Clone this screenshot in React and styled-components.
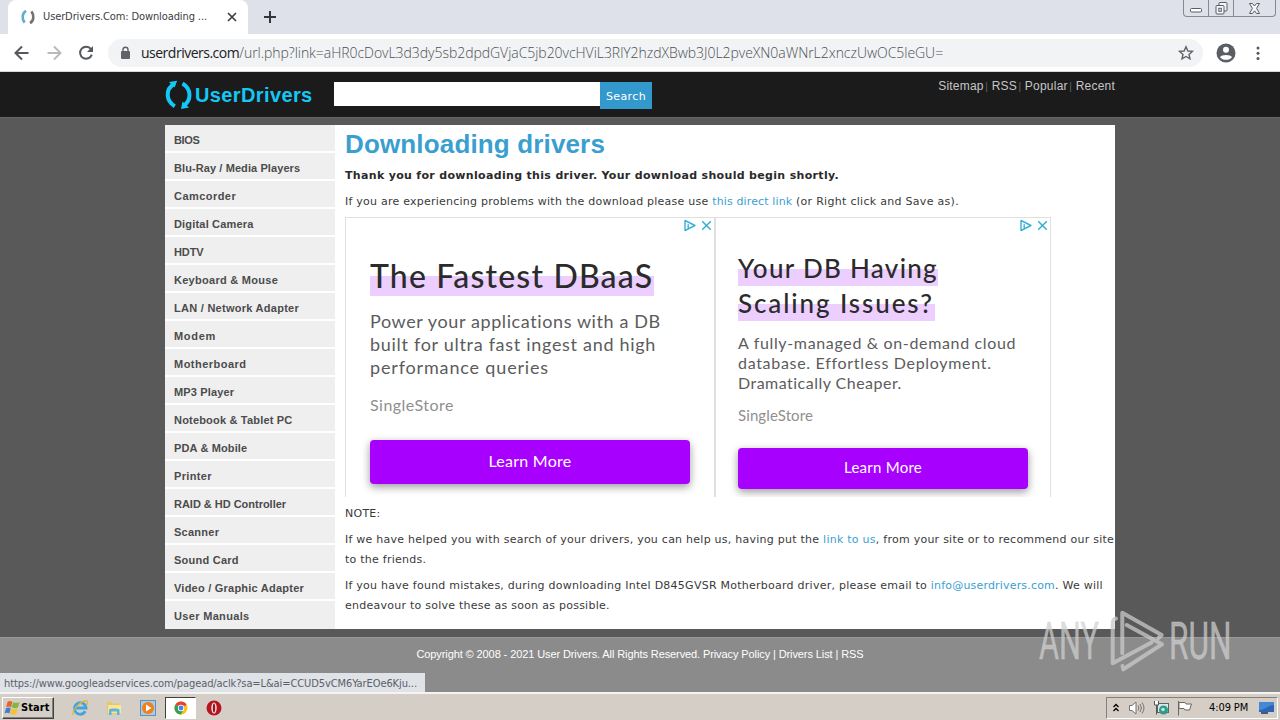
import React from "react";
import styled, { createGlobalStyle } from "styled-components";

const verdana = `"DejaVu Sans", Verdana, sans-serif`;
const tahoma = `"DejaVu Sans Condensed", Tahoma, sans-serif`;
const arial = `"Liberation Sans", Arial, sans-serif`;
const display = `Lato, sans-serif`;

const Global = createGlobalStyle`
  * { box-sizing: border-box; }
  html, body { margin: 0; padding: 0; overflow: hidden; }
  svg { display: block; flex: none; }
`;

const Screen = styled.div`
  position: relative;
  display: flex;
  flex-direction: column;
  width: 1280px;
  height: 720px;
  background: #595959;
`;

/* Browser chrome */
const TabStrip = styled.div`
  display: flex;
  height: 34px;
  padding-left: 8px;
  background: #dee1e9;
`;
const Tab = styled.div`
  display: flex;
  align-items: center;
  width: 240px;
  height: 34px;
  padding: 0 9px 0 12px;
  border-radius: 8px 8px 0 0;
  background: #fff;
`;
const TabTitle = styled.span`
  flex: 1;
  margin-left: 7px;
  font: 11px/14px ${tahoma};
  letter-spacing: -0.11px;
  color: #3c4043;
  white-space: nowrap;
`;
const NewTab = styled.div`
  display: flex;
  align-items: center;
  margin-left: 15px;
`;
const WindowControls = styled.div`
  display: flex;
  width: 93px;
  height: 17px;
  margin: 0 4px 0 auto;
  border: 1px solid #858991;
  border-top: 0;
  border-radius: 0 0 4px 4px;
`;
const WindowButton = styled.div`
  display: flex;
  align-items: center;
  justify-content: center;
  width: ${(p) => p.$width}px;
  border-left: ${(p) => (p.$first ? "0" : "1px solid #858991")};
`;
const Toolbar = styled.div`
  display: flex;
  align-items: center;
  height: 38px;
  padding: 0 12px 0 12px;
  border-bottom: 1px solid #d5d7da;
  background: #fff;
`;
const ToolIcon = styled.div`
  display: flex;
  justify-content: center;
  width: 20px;
  margin-right: 12px;
`;
const Omnibox = styled.div`
  display: flex;
  align-items: center;
  width: 1095px;
  height: 28px;
  padding: 0 8px 0 11px;
  border-radius: 14px;
  background: #f1f3f4;
`;
const Address = styled.div`
  flex: 1;
  margin-left: 9px;
  font: 300 14px/20px "Open Sans", sans-serif;
  letter-spacing: -0.04px;
  color: #4d5156;
  white-space: nowrap;
`;
const Host = styled.span`
  font-weight: 400;
  letter-spacing: -0.5px;
  color: #202124;
`;
const Profile = styled.div`
  display: flex;
  margin: 0 17px 0 13px;
`;

/* Site */
const SiteHeader = styled.header`
  display: flex;
  align-items: flex-start;
  height: 46px;
  padding: 0 165px;
  border-bottom: 1px solid #666;
  background: #1b1b1b;
`;
const Logo = styled.svg`
  margin-top: 7px;
`;
const SearchForm = styled.div`
  display: flex;
  margin: 10px 0 0 19px;
`;
const SearchField = styled.div`
  width: 266px;
  height: 24px;
  background: #fff;
`;
const SearchButton = styled.div`
  width: 52px;
  height: 27px;
  background: #3399cc;
  color: #fff;
  font: 11px/29px ${verdana};
  letter-spacing: 0.37px;
  text-align: center;
`;
const TopLinks = styled.nav`
  margin-left: auto;
  padding-top: 7px;
  font: 12px/14px ${arial};
  letter-spacing: 0.22px;
  color: #c6c6c6;
  white-space: nowrap;
`;
const Divider = styled.span`
  margin-left: 1.5px;
  font-size: 10px;
  color: #666;
`;
const Page = styled.div`
  display: flex;
  width: 950px;
  height: 504px;
  margin: 7px 165px 8px;
  background: #fff;
`;
const Sidebar = styled.nav`
  width: 170px;
`;
const Category = styled.div`
  height: 28px;
  padding-left: 9px;
  border-bottom: ${(p) => (p.$last ? "0" : "2px solid #fff")};
  background: #efefef;
  color: #4b4b4b;
  font: bold 11px/30px ${arial};
  letter-spacing: ${(p) => p.$spacing ?? 0.18}px;
  white-space: nowrap;
`;
const Content = styled.main`
  display: flex;
  flex-direction: column;
  width: 780px;
  padding-left: 10px;
`;
const Title = styled.h1`
  height: 30px;
  margin: 4px 0 7px;
  font: bold 26px/30px ${arial};
  letter-spacing: 0.15px;
  color: #3a9fd0;
`;
const Text = styled.p`
  margin: 0 0 6px;
  font: ${(p) => (p.$bold ? "bold" : "normal")} 11px/20px ${verdana};
  letter-spacing: ${(p) => (p.$bold ? 0.325 : p.$spacing ?? 0.25)}px;
  color: ${(p) => (p.$bold ? "#2a2a2a" : "#3a3a3a")};
  white-space: nowrap;
`;
const Link = styled.a`
  color: #3b9fd0;
  letter-spacing: ${(p) => p.$spacing ?? 0.25}px;
`;
const Aside = styled.span`
  letter-spacing: 0.29px;
`;

/* Advertisements */
const Ads = styled.div`
  display: flex;
  height: 280px;
  margin: -1px 0 7px;
  overflow: hidden;
`;
const Ad = styled.section`
  position: relative;
  width: ${(p) => p.$width}px;
  padding: ${(p) => p.$padding};
  border: 1px solid #e0e0e0;
  border-bottom: 0;
  font-family: ${display};
  white-space: nowrap;
`;
const AdChoices = styled.div`
  position: absolute;
  top: 1px;
  right: 1px;
  display: flex;
  gap: 3px;
`;
const Headline = styled.h2`
  margin: 0;
  font-size: ${(p) => p.$size}px;
  line-height: ${(p) => p.$line}px;
  font-weight: 500;
  color: #2b2b2b;
`;
const Marked = styled.span`
  display: block;
  width: ${(p) => p.$width}px;
  letter-spacing: ${(p) => p.$spacing}px;
  background: linear-gradient(transparent ${(p) => p.$from}px, #eccfff ${(p) => p.$from}px, #eccfff ${(p) => p.$to}px, transparent ${(p) => p.$to}px);
`;
const Pitch = styled.div`
  margin-top: ${(p) => p.$top}px;
  font-size: ${(p) => p.$size}px;
  line-height: ${(p) => p.$line}px;
  color: #5c5c5c;
`;
const PitchLine = styled.div`
  letter-spacing: ${(p) => p.$spacing}px;
`;
const Brand = styled.div`
  margin-top: ${(p) => p.$top}px;
  font-size: ${(p) => p.$size}px;
  line-height: 20px;
  letter-spacing: ${(p) => p.$spacing}px;
  color: #8f8f8f;
`;
const CallToAction = styled.div`
  width: ${(p) => p.$width}px;
  height: ${(p) => p.$height}px;
  margin-top: ${(p) => p.$top}px;
  border-radius: 4px;
  background: #a800ff;
  box-shadow: 0 3px 8px rgba(0, 0, 0, 0.4);
  color: #fff;
  font-size: ${(p) => p.$size}px;
  line-height: ${(p) => p.$height - 2}px;
  letter-spacing: 0.25px;
  text-align: center;
`;

const Footer = styled.footer`
  height: 55px;
  border-top: 1px solid #999;
  background: #8b8b8b;
  color: #fff;
  font: 11px/33px ${arial};
  letter-spacing: -0.1px;
  text-align: center;
`;
const StatusBubble = styled.div`
  position: absolute;
  left: 0;
  top: 673px;
  width: 425px;
  height: 19px;
  padding-left: 4px;
  background: #dfe2e7;
  color: #5c6066;
  font: 11px/21px ${tahoma};
  letter-spacing: -0.095px;
  white-space: nowrap;
`;
const Watermark = styled.svg`
  position: absolute;
  left: 1036px;
  top: 606px;
`;

/* Taskbar */
const Taskbar = styled.div`
  display: flex;
  align-items: center;
  height: 28px;
  padding: 1px 2px 0;
  border-top: 2px solid #f6f4f1;
  background: #d5cec7;
`;
const StartButton = styled.div`
  display: flex;
  align-items: center;
  width: 52px;
  height: 22px;
  padding-left: 1px;
  border: 1px solid;
  border-color: #fff #404040 #404040 #fff;
  box-shadow: inset -1px -1px #858079;
  color: #000;
  font: bold 11px/18px ${tahoma};
  letter-spacing: 0.1px;
`;
const Launcher = styled.div`
  display: flex;
  align-items: center;
  justify-content: center;
  width: ${(p) => (p.$active ? 31 : 34)}px;
  height: 22px;
  border: 1px solid;
  border-color: ${(p) => (p.$active ? "#404040 #fff #fff #404040" : "transparent")};
  background: ${(p) => (p.$active ? "#fff" : "transparent")};
`;
const Launchers = styled.div`
  display: flex;
  padding-left: 9px;
`;
const Tray = styled.div`
  display: flex;
  align-items: center;
  width: 172px;
  height: 22px;
  margin-left: auto;
  padding-left: 6px;
  border: 1px solid;
  border-color: #858079 #fff #fff #858079;
`;
const TrayIcon = styled.div`
  margin-right: ${(p) => p.$gap}px;
`;
const Clock = styled.div`
  margin-right: 10px;
  color: #000;
  font: 11px/18px ${tahoma};
  letter-spacing: -0.1px;
  white-space: nowrap;
`;

const ArrowIcon = ({ color, flip }) => (
  <svg width="16" height="16" viewBox="0 0 16 16" fill="none" stroke={color} strokeWidth="2">
    <path d={flip ? "M1.500 8H14M8 1.500 14.500 8 8 14.500" : "M14.500 8H2M8 1.500 1.500 8 8 14.500"} />
  </svg>
);

const AdBadge = () => (
  <AdChoices>
    <svg width="14" height="13" viewBox="0 0 14 13" fill="none" stroke="#3aafd4" strokeWidth="1.4">
      <path d="M2 1.500V11.500L12 6.500Z" strokeLinejoin="round" />
      <path d="M5.200 5.300V9" />
    </svg>
    <svg width="13" height="13" viewBox="0 0 13 13" stroke="#3aafd4" strokeWidth="1.5">
      <path d="M2.200 2.200 10.800 10.800M10.800 2.200 2.200 10.800" />
    </svg>
  </AdChoices>
);

const categories = [
  ["BIOS", -0.35], ["Blu-Ray / Media Players", 0.09], ["Camcorder", 0.45], ["Digital Camera", 0.18], ["HDTV", -0.1],
  ["Keyboard & Mouse", 0.28], ["LAN / Network Adapter", 0.27], ["Modem", 0.7], ["Motherboard", 0.48], ["MP3 Player", 0.15],
  ["Notebook & Tablet PC", 0.19], ["PDA & Mobile", 0.13], ["Printer", 0.35], ["RAID & HD Controller", -0.02],
  ["Scanner", 0.25], ["Sound Card", 0.25], ["Video / Graphic Adapter", 0.23], ["User Manuals", 0.33],
];

export default function App() {
  return (
    <Screen>
      <Global />
      <TabStrip>
        <Tab>
          <svg width="16" height="16" viewBox="0 0 16 16" fill="none" strokeWidth="2.600">
            <path d="M6 1.800C2.300 4 1.400 9.500 4.600 13.600" stroke="#62a9d3" />
            <path d="M10 14.200C13.700 12 14.600 6.500 11.400 2.400" stroke="#77706f" />
          </svg>
          <TabTitle>UserDrivers.Com: Downloading ...</TabTitle>
          <svg width="14" height="14" viewBox="0 0 14 14" stroke="#3c4043" strokeWidth="1.700">
            <path d="M3 3 11 11M11 3 3 11" />
          </svg>
        </Tab>
        <NewTab>
          <svg width="14" height="14" viewBox="0 0 14 14" stroke="#33363a" strokeWidth="2">
            <path d="M7 1V13M1 7H13" />
          </svg>
        </NewTab>
        <WindowControls>
          <WindowButton $width={24} $first>
            <svg width="14" height="15" viewBox="0 0 14 15" fill="#fff" stroke="#585c64">
              <rect x="1.500" y="7.500" width="11" height="3.500" rx="1" />
            </svg>
          </WindowButton>
          <WindowButton $width={25}>
            <svg width="15" height="15" viewBox="0 0 15 15" fill="#f4f5f8" stroke="#585c64">
              <rect x="5" y="1.500" width="8" height="8.500" rx="1" />
              <rect x="2" y="4.500" width="8" height="8.500" rx="1" />
              <rect x="4.800" y="7.300" width="2.500" height="3" />
            </svg>
          </WindowButton>
          <WindowButton $width={42}>
            <svg width="13" height="13" viewBox="0 0 13 13" fill="#f6f6f8" stroke="#585c64">
              <path d="M1.500 1.500H4.500L6.500 4 8.500 1.500H11.500L8.600 6.300 11.500 11.500H8.500L6.500 8.800 4.500 11.500H1.500L4.400 6.300Z" />
            </svg>
          </WindowButton>
        </WindowControls>
      </TabStrip>
      <Toolbar>
        <ToolIcon><ArrowIcon color="#55585c" /></ToolIcon>
        <ToolIcon><ArrowIcon color="#b9babd" flip /></ToolIcon>
        <ToolIcon>
          <svg width="16" height="16" viewBox="0 0 16 16">
            <path d="M13 4.200A6 6 0 1 0 13.800 9.600" fill="none" stroke="#55585c" strokeWidth="2" />
            <path d="M15 1V7H9Z" fill="#55585c" />
          </svg>
        </ToolIcon>
        <Omnibox>
          <svg width="13" height="14" viewBox="0 0 13 14">
            <rect x="2" y="5" width="9" height="8" rx="1" fill="#5f6368" />
            <path d="M4 5.500V3.800a2.500 2.500 0 0 1 5 0V5.500" fill="none" stroke="#5f6368" strokeWidth="1.400" />
          </svg>
          <Address>
            <Host>userdrivers.com</Host>/url.php?link=aHR0cDovL3d3dy5sb2dpdGVjaC5jb20vcHViL3RlY2hzdXBwb3J0L2pveXN0aWNrL2xnczUwOC5leGU=
          </Address>
          <svg width="18" height="18" viewBox="0 0 18 18" fill="none" stroke="#5f6368" strokeWidth="1.400">
            <path d="M9 2.800 10.900 7 15.400 7.400 12 10.400 13 14.800 9 12.500 5 14.800 6 10.400 2.600 7.400 7.100 7Z" />
          </svg>
        </Omnibox>
        <Profile>
          <svg width="20" height="20" viewBox="0 0 20 20">
            <circle cx="10" cy="10" r="9.500" fill="#5a5d62" />
            <circle cx="10" cy="6.800" r="3" fill="#fff" />
            <path d="M4 14.200C5 11.300 15 11.300 16 14.200 13.800 17.600 6.200 17.600 4 14.200Z" fill="#fff" />
          </svg>
        </Profile>
        <svg width="12" height="16" viewBox="0 0 12 16" fill="#55585c">
          <circle cx="5" cy="3" r="1.500" /><circle cx="5" cy="8.200" r="1.500" /><circle cx="5" cy="13.400" r="1.500" />
        </svg>
      </Toolbar>

      <SiteHeader>
        <Logo width="150" height="32" viewBox="0 0 150 32">
          <path d="M9.500 4.500C-.3 10.500 1 22 9.800 27.300" fill="none" stroke="#14c8f5" strokeWidth="4" />
          <path d="M4 3 12.200 1.800 9.500 8.500Z" fill="#14c8f5" />
          <path d="M17.500 4.500C27 10 26.500 22 18 27" fill="none" stroke="#14c8f5" strokeWidth="4" />
          <path d="M17.500 22.500 24 28.500 16 30Z" fill="#14c8f5" />
          <text x="30" y="22.500" fill="#14c8f5" fontFamily="Liberation Sans" fontWeight="bold" fontSize="20" letterSpacing=".38">UserDrivers</text>
        </Logo>
        <SearchForm>
          <SearchField />
          <SearchButton>Search</SearchButton>
        </SearchForm>
        <TopLinks>
          Sitemap<Divider>|</Divider> RSS<Divider>|</Divider> Popular<Divider>|</Divider> Recent
        </TopLinks>
      </SiteHeader>

      <Page>
        <Sidebar>
          {categories.map(([name, spacing], i) => (
            <Category key={name} $spacing={spacing} $last={i === categories.length - 1}>{name}</Category>
          ))}
        </Sidebar>
        <Content>
          <Title>Downloading drivers</Title>
          <Text $bold>Thank you for downloading this driver. Your download should begin shortly.</Text>
          <Text $spacing={0.235}>
            If you are experiencing problems with the download please use <Link $spacing={0.13}>this direct link</Link> <Aside>(or Right click and Save as).</Aside>
          </Text>
          <Ads>
            <Ad $width={370} $padding="37px 24px 0">
              <AdBadge />
              <Headline $size={32} $line={42}>
                <Marked $width={284} $spacing={1.17} $from={21} $to={41}>The Fastest DBaaS</Marked>
              </Headline>
              <Pitch $top={13} $size={18} $line={23}>
                <PitchLine $spacing={0.6}>Power your applications with a DB</PitchLine>
                <PitchLine $spacing={0.7}>built for ultra fast ingest and high</PitchLine>
                <PitchLine $spacing={0.84}>performance queries</PitchLine>
              </Pitch>
              <Brand $top={16} $size={16} $spacing={0.48}>SingleStore</Brand>
              <CallToAction $width={320} $height={44} $top={25} $size={16}>Learn More</CallToAction>
            </Ad>
            <Ad $width={336} $padding="33px 22px 0">
              <AdBadge />
              <Headline $size={26} $line={35}>
                <Marked $width={200} $spacing={1.3} $from={18} $to={35}>Your DB Having</Marked>
                <Marked $width={197} $spacing={1.9} $from={18} $to={35}>Scaling Issues?</Marked>
              </Headline>
              <Pitch $top={12} $size={16} $line={20}>
                <PitchLine $spacing={0.65}>A fully-managed &amp; on-demand cloud</PitchLine>
                <PitchLine $spacing={0.69}>database. Effortless Deployment.</PitchLine>
                <PitchLine $spacing={0.48}>Dramatically Cheaper.</PitchLine>
              </Pitch>
              <Brand $top={12} $size={15} $spacing={0.11}>SingleStore</Brand>
              <CallToAction $width={290} $height={41} $top={23} $size={15}>Learn More</CallToAction>
            </Ad>
          </Ads>
          <Text>NOTE:</Text>
          <Text>
            If we have helped you with search of your drivers, you can help us, having put the <Link>link to us</Link>, from your site or to recommend our site
            <br />to the friends.
          </Text>
          <Text>
            If you have found mistakes, during downloading Intel D845GVSR Motherboard driver, please email to <Link $spacing={0.18}>info@userdrivers.com</Link>. We will
            <br />endeavour to solve these as soon as possible.
          </Text>
        </Content>
      </Page>

      <Footer>
        Copyright © 2008 - 2021 User Drivers. All Rights Reserved. Privacy Policy | Drivers List | RSS
      </Footer>

      <Taskbar>
        <StartButton>
          <svg width="17" height="16" viewBox="0 0 17 16">
            <path d="M3.500 2C5 .8 6.500 .8 8.300 1.700L7.100 7.200C5.300 6.300 4 6.400 2.200 7.300Z" fill="#e8632b" />
            <path d="M9 2.200C10.800 3 13 3.200 15.500 2L14 7.500C11.800 8.500 9.500 8.400 7.800 7.600Z" fill="#7fb843" />
            <path d="M2 8.300C3.700 7.400 5 7.400 6.700 8.200L5.400 13.500C3.700 12.600 2.400 12.600 .6 13.500Z" fill="#3f7fd0" />
            <path d="M7.500 8.700C9.200 9.500 11.300 9.600 13.600 8.500L12.200 14C9.900 15 8 14.800 6.100 14Z" fill="#f6c033" />
          </svg>
          Start
        </StartButton>
        <Launchers>
          <Launcher>
            <svg width="18" height="18" viewBox="0 0 18 18" fill="none">
              <path d="M14.300 12.300A5.800 5.800 0 1 1 15 9H5" stroke="#41a5df" strokeWidth="2.800" />
              <path d="M2.500 16C-.5 12 11 1 15.500 1.800 17.500 2.400 16.500 5 15.500 6.200" stroke="#e5b53b" strokeWidth="1.300" />
            </svg>
          </Launcher>
          <Launcher>
            <svg width="18" height="18" viewBox="0 0 18 18">
              <path d="M2 3H7L8.500 4.500H15V15H2Z" fill="#e9c765" />
              <path d="M3 6H16V14H3Z" fill="#f8e69c" />
              <path d="M4 16V10.500C4 9 14.500 9 14.500 10.500V16H12V12.500H6.500V16Z" fill="#5fb5dc" />
            </svg>
          </Launcher>
          <Launcher>
            <svg width="18" height="18" viewBox="0 0 18 18">
              <rect x="1.500" y="1.500" width="15" height="15" fill="#a9cbe7" stroke="#6590b5" />
              <circle cx="9" cy="9" r="6" fill="#ef8118" />
              <path d="M7 5.500 12.500 9 7 12.500Z" fill="#fff" />
            </svg>
          </Launcher>
          <Launcher $active>
            <svg width="14" height="14" viewBox="0 0 14 14">
              <circle cx="7" cy="7" r="6.500" fill="#fbc116" />
              <path d="M7 7 1.370 3.750A6.500 6.500 0 0 1 12.630 3.750Z" fill="#df4435" />
              <path d="M7 7 1.370 3.750A6.500 6.500 0 0 0 7 13.500L9.500 8.500Z" fill="#31a350" />
              <circle cx="7" cy="7" r="3.200" fill="#fff" />
              <circle cx="7" cy="7" r="2.400" fill="#4583ed" />
            </svg>
          </Launcher>
          <Launcher>
            <svg width="18" height="16" viewBox="0 0 18 16">
              <circle cx="10" cy="8" r="7.500" fill="#b31621" />
              <ellipse cx="10" cy="8" rx="2.700" ry="5.500" fill="#f4e4e4" />
              <ellipse cx="10" cy="8" rx="1.200" ry="4.600" fill="#a40f1a" />
            </svg>
          </Launcher>
        </Launchers>
        <Tray>
          <TrayIcon $gap={9}>
            <svg width="6" height="10" viewBox="0 0 6 10" fill="none" stroke="#000" strokeWidth="1.300">
              <path d="M.5 4 3 1.500 5.500 4M.5 8 3 5.500 5.500 8" />
            </svg>
          </TrayIcon>
          <TrayIcon $gap={8}>
            <svg width="17" height="16" viewBox="0 0 17 16" fill="none" stroke="#77736e">
              <path d="M1.500 5.500H4L8 2V14L4 10.500H1.500Z" fill="#fff" />
              <path d="M10 5.500Q12 8 10 10.500M12 4Q15 8 12 12M14 2.500Q18 8 14 13.500" />
            </svg>
          </TrayIcon>
          <TrayIcon $gap={7}>
            <svg width="17" height="16" viewBox="0 0 17 16">
              <rect x="4.500" y="3.500" width="11" height="9" fill="#d6e9ef" stroke="#5c6668" />
              <circle cx="10.500" cy="10" r="4.500" fill="#2f9a86" />
              <circle cx="10" cy="9.500" r="1.800" fill="#bfe6d8" />
              <path d="M1.500 1V5H5.500V1M3.500 5V14.500" fill="#fff" stroke="#555" />
            </svg>
          </TrayIcon>
          <TrayIcon $gap={16}>
            <svg width="16" height="16" viewBox="0 0 16 16" fill="#fff" stroke="#6b6762">
              <path d="M1.500 1V15.500M2 2.500H8L9 4H14.500L12.500 10H8L7 8.500H2Z" />
            </svg>
          </TrayIcon>
          <Clock>4:09 PM</Clock>
          <svg width="17" height="14" viewBox="0 0 17 14">
            <rect x="1" y="1" width="15" height="10" fill="#2b66b5" />
            <path d="M1 1H16V4C10 4 7 9 1 9Z" fill="#4587d3" />
            <path d="M3 12H10" stroke="#16335f" strokeWidth="1.500" />
          </svg>
        </Tray>
      </Taskbar>

      <StatusBubble>https://www.googleadservices.com/pagead/aclk?sa=L&amp;ai=CCUD5vCM6YarEOe6Kju...</StatusBubble>

      <Watermark width="240" height="80" viewBox="0 0 240 80">
        <g fill="#d0d0d0" fillOpacity=".72" stroke="#d0d0d0" strokeOpacity=".4" strokeWidth=".8" fontFamily="Roboto" fontSize="51">
          <text x="3" y="53.300" textLength="60" lengthAdjust="spacingAndGlyphs">ANY</text>
          <text x="133" y="53.300" textLength="62.500" lengthAdjust="spacingAndGlyphs">RUN</text>
        </g>
        <path
          d="M86.300 47.300V6.700L125.700 29 122.500 32M90.700 19 126 38.200 87.300 63.300 86.500 60M80 12.500Q76.700 13 76.700 18V57.300L115.500 36.500"
          fill="none" stroke="#cacaca" strokeOpacity=".75" strokeWidth="4" strokeLinejoin="round" strokeLinecap="round"
        />
      </Watermark>
    </Screen>
  );
}
